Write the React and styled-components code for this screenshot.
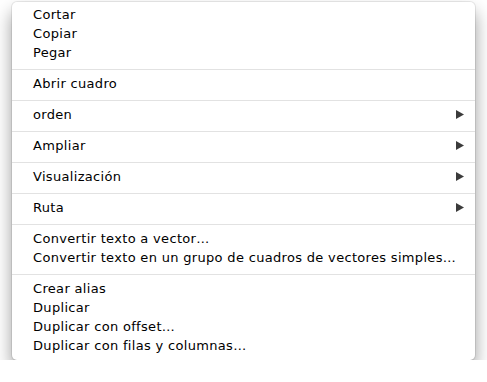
import styled, { createGlobalStyle } from "styled-components";

const GlobalStyle = createGlobalStyle`
  html, body {
    margin: 0;
    background: #ffffff;
  }
  body {
    font-family: "DejaVu Sans", "Liberation Sans", sans-serif;
  }
`;

const Page = styled.div`
  padding: 2px 12px 0;
  width: 463px;
`;

const Menu = styled.div`
  background: #ffffff;
  border-radius: 5px;
  box-shadow: 0 0 0 1px rgba(0, 0, 0, 0.08), 0 10px 18px rgba(0, 0, 0, 0.4);
  overflow: hidden;
`;

const Group = styled.div`
  padding: ${(props) => (props.$first ? "3px" : "4px")} 0 ${(props) => (props.$last ? "5px" : "7px")};
  border-top: ${(props) => (props.$first ? "none" : "1px solid #e2e2e2")};
`;

const Item = styled.div`
  display: flex;
  align-items: center;
  justify-content: space-between;
  height: 19px;
  padding: 0 11px 0 21px;
  font-size: 13px;
  letter-spacing: 0.32px;
  color: #000000;
  white-space: nowrap;
`;

const Arrow = styled.svg`
  width: 8px;
  height: 9px;
  display: block;
`;

function SubmenuArrow() {
  return (
    <Arrow viewBox="0 0 8 9">
      <polygon points="0,0 8,4.5 0,9" fill="#3b3b3b" />
    </Arrow>
  );
}

const groups = [
  [{ label: "Cortar" }, { label: "Copiar" }, { label: "Pegar" }],
  [{ label: "Abrir cuadro" }],
  [{ label: "orden", sub: true }],
  [{ label: "Ampliar", sub: true }],
  [{ label: "Visualización", sub: true }],
  [{ label: "Ruta", sub: true }],
  [
    { label: "Convertir texto a vector…" },
    { label: "Convertir texto en un grupo de cuadros de vectores simples…" },
  ],
  [
    { label: "Crear alias" },
    { label: "Duplicar" },
    { label: "Duplicar con offset…" },
    { label: "Duplicar con filas y columnas…" },
  ],
];

export default function App() {
  return (
    <>
      <GlobalStyle />
      <Page>
        <Menu>
          {groups.map((items, gi) => (
            <Group key={gi} $first={gi === 0} $last={gi === groups.length - 1}>
              {items.map((item) => (
                <Item key={item.label}>
                  <span>{item.label}</span>
                  {item.sub && <SubmenuArrow />}
                </Item>
              ))}
            </Group>
          ))}
        </Menu>
      </Page>
    </>
  );
}
